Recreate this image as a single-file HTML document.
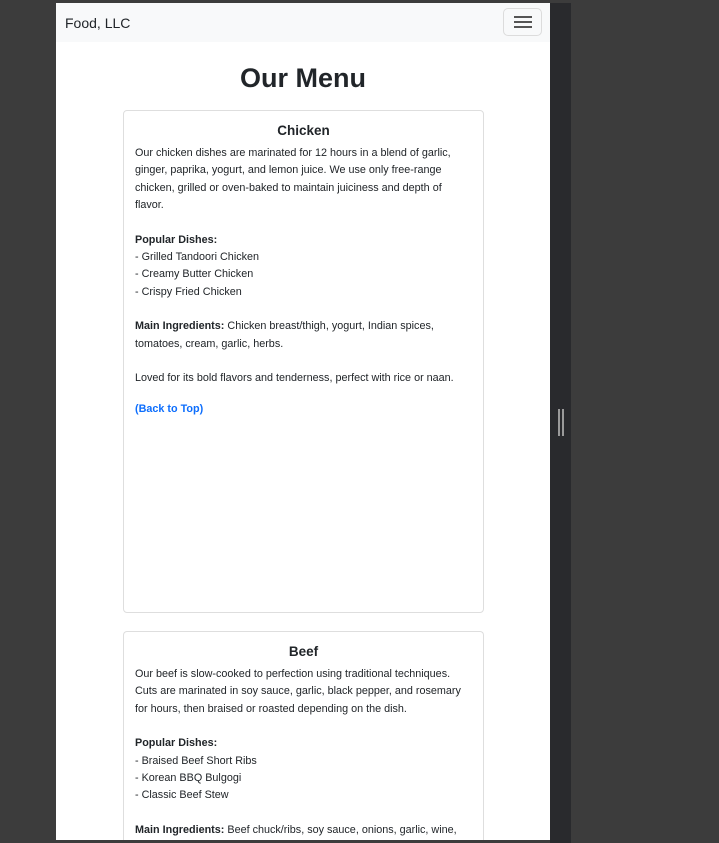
<!DOCTYPE html>
<html><head><meta charset="utf-8"><style>
html,body{margin:0;width:719px;height:843px;overflow:hidden}
body{background:#3c3c3c;position:relative;font-family:"Liberation Sans",sans-serif;color:#212529}
#pg{position:absolute;left:56px;top:3px;width:494px;height:837px;background:#fff;overflow:hidden}
#sb{position:absolute;left:550px;top:3px;width:21px;height:840px;background:#292a2d}
.h{position:absolute;top:406px;width:2px;height:27px;background:#9a9a9a}
nav{position:absolute;left:0;top:0;width:494px;height:39px;background:#f8f9fa}
.brand{position:absolute;left:9px;top:12px;font-size:14px}
.tog{position:absolute;left:447px;top:5px;width:39px;height:28px;border:1px solid #dcdcdc;border-radius:5px;box-sizing:border-box}
.tog i{position:absolute;left:10px;width:18px;height:2px;background:#555}
h1{position:absolute;left:0;width:494px;top:58px;margin:0;text-align:center;font-size:27px;font-weight:bold;line-height:34px}
.card{position:absolute;left:67px;width:361px;border:1px solid #dedede;border-radius:4px;box-sizing:border-box}
.card h5{margin:0;text-align:center;font-size:13.5px;font-weight:bold;position:absolute;left:0;width:100%;top:12px}
.card .b{position:absolute;left:11px;top:34px;font-size:10.8px;line-height:17.35px;white-space:nowrap}
a{color:#0d6efd;font-weight:bold;text-decoration:none}
</style></head><body>
<div id="pg">
<nav><div class="brand">Food, LLC</div><div class="tog"><i style="top:7px"></i><i style="top:12px"></i><i style="top:17px"></i></div></nav>
<h1>Our Menu</h1>
<div class="card" style="top:107px;height:503px"><h5>Chicken</h5><div class="b">
Our chicken dishes are marinated for 12 hours in a blend of garlic,<br>ginger, paprika, yogurt, and lemon juice. We use only free-range<br>chicken, grilled or oven-baked to maintain juiciness and depth of<br>flavor.<br><br><b>Popular Dishes:</b><br>- Grilled Tandoori Chicken<br>- Creamy Butter Chicken<br>- Crispy Fried Chicken<br><br><b>Main Ingredients:</b> Chicken breast/thigh, yogurt, Indian spices,<br>tomatoes, cream, garlic, herbs.<br><br>Loved for its bold flavors and tenderness, perfect with rice or naan.<br><div style="height:13px"></div><a>(Back to Top)</a></div></div>
<div class="card" style="top:628px;height:209px;border-bottom:none;border-radius:4px 4px 0 0"><h5>Beef</h5><div class="b">
Our beef is slow-cooked to perfection using traditional techniques.<br>Cuts are marinated in soy sauce, garlic, black pepper, and rosemary<br>for hours, then braised or roasted depending on the dish.<br><br><b>Popular Dishes:</b><br>- Braised Beef Short Ribs<br>- Korean BBQ Bulgogi<br>- Classic Beef Stew<br><br><b>Main Ingredients:</b> Beef chuck/ribs, soy sauce, onions, garlic, wine,</div></div>
</div>
<div id="sb"><div class="h" style="left:8px"></div><div class="h" style="left:12px"></div></div>
</body></html>
